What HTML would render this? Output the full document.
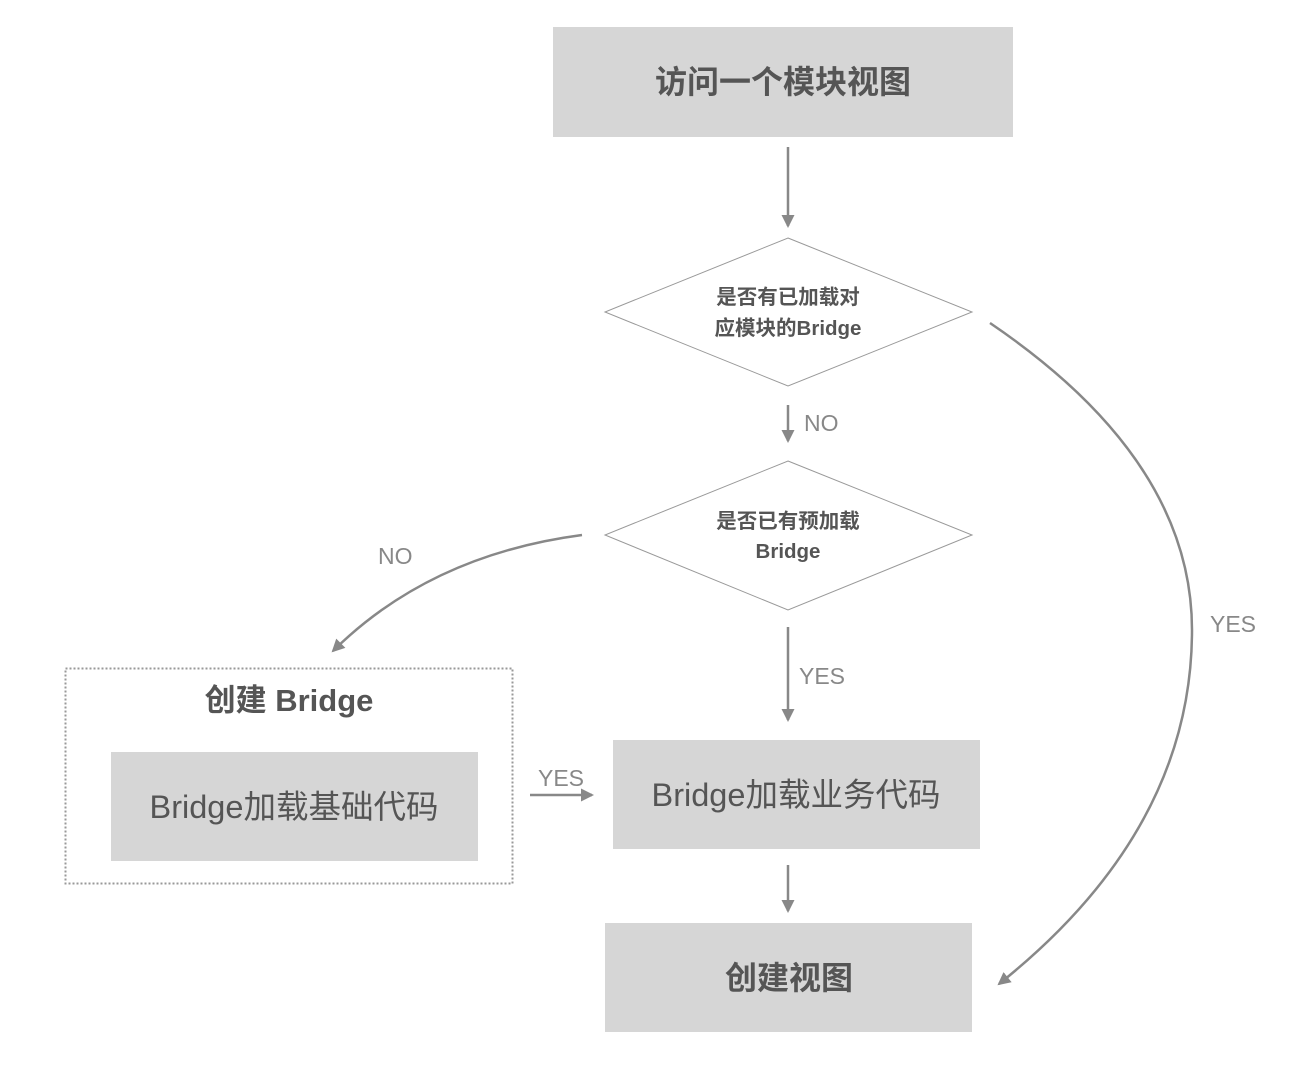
<!DOCTYPE html>
<html><head><meta charset="utf-8"><style>
html,body{margin:0;padding:0;background:#fff;}
svg{display:block;}
text{font-family:"Liberation Sans","Noto Sans CJK SC",sans-serif;fill:#555;}
</style></head><body>
<svg width="1314" height="1068" viewBox="0 0 1314 1068" xmlns="http://www.w3.org/2000/svg">
<defs>
<marker id="ah" markerWidth="14" markerHeight="14" refX="11" refY="6.5" orient="auto" markerUnits="userSpaceOnUse"><path d="M0,0 L13,6.5 L0,13 z" fill="#888"/></marker>
</defs>
<rect x="553" y="27" width="460" height="110" fill="#d6d6d6"/>
<text x="783" y="93" font-size="32" font-weight="bold" text-anchor="middle">访问一个模块视图</text>
<line x1="788" y1="147" x2="788" y2="226" stroke="#888" stroke-width="2.5" marker-end="url(#ah)"/>
<polygon points="788,238 972,312 788,386 605,312" fill="#fff" stroke="#999" stroke-width="1"/>
<text x="788" y="304" font-size="20.5" font-weight="bold" text-anchor="middle">是否有已加载对</text>
<text x="788" y="335" font-size="20.5" font-weight="bold" text-anchor="middle">应模块的Bridge</text>
<line x1="788" y1="405" x2="788" y2="441" stroke="#888" stroke-width="2.5" marker-end="url(#ah)"/>
<text x="804" y="431" font-size="23" style="fill:#888">NO</text>
<polygon points="788,461 972,535 788,610 605,535" fill="#fff" stroke="#999" stroke-width="1"/>
<text x="788" y="528" font-size="20.5" font-weight="bold" text-anchor="middle">是否已有预加载</text>
<text x="788" y="558" font-size="20.5" font-weight="bold" text-anchor="middle">Bridge</text>
<line x1="788" y1="627" x2="788" y2="720" stroke="#888" stroke-width="2.5" marker-end="url(#ah)"/>
<text x="799" y="684" font-size="23" style="fill:#888">YES</text>
<path d="M582,535 Q430,555 333,651" fill="none" stroke="#888" stroke-width="2.5" marker-end="url(#ah)"/>
<text x="378" y="564" font-size="23" style="fill:#888">NO</text>
<path d="M990,323 Q1192,460 1192,630 Q1192,830 999,984" fill="none" stroke="#888" stroke-width="2.5" marker-end="url(#ah)"/>
<text x="1210" y="632" font-size="23" style="fill:#888">YES</text>
<rect x="65.5" y="668.5" width="447" height="215" fill="none" stroke="#999" stroke-width="2" stroke-dasharray="2,2"/>
<text x="289" y="711" font-size="31" font-weight="bold" text-anchor="middle">创建 Bridge</text>
<rect x="111" y="752" width="367" height="109" fill="#d6d6d6"/>
<text x="294" y="818" font-size="32.5" text-anchor="middle">Bridge加载基础代码</text>
<line x1="530" y1="795" x2="592" y2="795" stroke="#888" stroke-width="2.5" marker-end="url(#ah)"/>
<text x="538" y="786" font-size="23" style="fill:#888">YES</text>
<rect x="613" y="740" width="367" height="109" fill="#d6d6d6"/>
<text x="796" y="806" font-size="32.5" text-anchor="middle">Bridge加载业务代码</text>
<line x1="788" y1="865" x2="788" y2="911" stroke="#888" stroke-width="2.5" marker-end="url(#ah)"/>
<rect x="605" y="923" width="367" height="109" fill="#d6d6d6"/>
<text x="789" y="989" font-size="32" font-weight="bold" text-anchor="middle">创建视图</text>
</svg>
</body></html>
